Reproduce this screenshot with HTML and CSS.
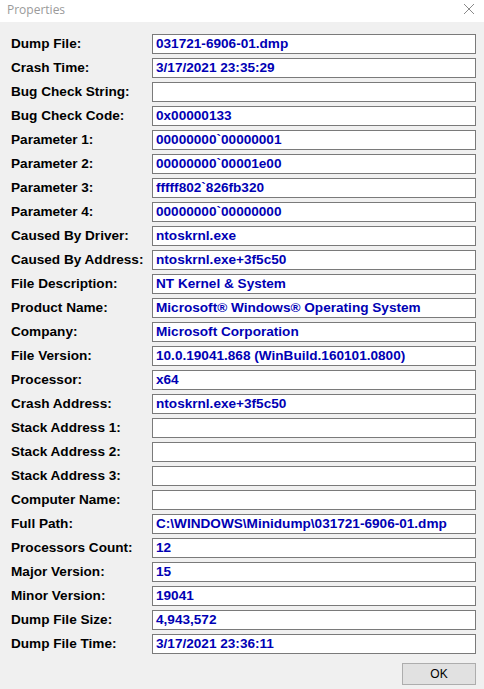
FILE: index.html
```html
<!DOCTYPE html>
<html>
<head>
<meta charset="utf-8">
<link rel="stylesheet" href="styles.css">
</head>
<body>
<div class="window">
  <div class="titlebar">
    <span class="title">Properties</span>
    <svg class="close" width="12" height="12" viewBox="0 0 12 12"><path d="M1 1 L11 11 M11 1 L1 11" stroke="#8a8a8a" stroke-width="1"/></svg>
  </div>
  <div class="content">
    <div class="grid">
      <div class="label">Dump File:</div><div class="field">031721-6906-01.dmp</div>
      <div class="label">Crash Time:</div><div class="field">3/17/2021 23:35:29</div>
      <div class="label">Bug Check String:</div><div class="field"></div>
      <div class="label">Bug Check Code:</div><div class="field">0x00000133</div>
      <div class="label">Parameter 1:</div><div class="field">00000000`00000001</div>
      <div class="label">Parameter 2:</div><div class="field">00000000`00001e00</div>
      <div class="label">Parameter 3:</div><div class="field">fffff802`826fb320</div>
      <div class="label">Parameter 4:</div><div class="field">00000000`00000000</div>
      <div class="label">Caused By Driver:</div><div class="field">ntoskrnl.exe</div>
      <div class="label">Caused By Address:</div><div class="field">ntoskrnl.exe+3f5c50</div>
      <div class="label">File Description:</div><div class="field">NT Kernel &amp; System</div>
      <div class="label">Product Name:</div><div class="field">Microsoft® Windows® Operating System</div>
      <div class="label">Company:</div><div class="field">Microsoft Corporation</div>
      <div class="label">File Version:</div><div class="field">10.0.19041.868 (WinBuild.160101.0800)</div>
      <div class="label">Processor:</div><div class="field">x64</div>
      <div class="label">Crash Address:</div><div class="field">ntoskrnl.exe+3f5c50</div>
      <div class="label">Stack Address 1:</div><div class="field"></div>
      <div class="label">Stack Address 2:</div><div class="field"></div>
      <div class="label">Stack Address 3:</div><div class="field"></div>
      <div class="label">Computer Name:</div><div class="field"></div>
      <div class="label">Full Path:</div><div class="field">C:\WINDOWS\Minidump\031721-6906-01.dmp</div>
      <div class="label">Processors Count:</div><div class="field">12</div>
      <div class="label">Major Version:</div><div class="field">15</div>
      <div class="label">Minor Version:</div><div class="field">19041</div>
      <div class="label">Dump File Size:</div><div class="field">4,943,572</div>
      <div class="label">Dump File Time:</div><div class="field">3/17/2021 23:36:11</div>
    </div>
    <div class="buttons">
      <button class="ok">OK</button>
    </div>
  </div>
</div>
</body>
</html>
```
FILE: styles.css
```css
html, body {
  margin: 0;
  padding: 0;
  background: #f0f0f0;
}
.window {
  width: 484px;
  height: 689px;
  background: #f0f0f0;
  overflow: hidden;
}
.titlebar {
  height: 22px;
  background: #ffffff;
  display: flex;
  align-items: center;
  justify-content: space-between;
  padding: 0 9px 0 7px;
}
.title {
  font-family: "Open Sans", "Noto Sans", sans-serif;
  font-size: 12px;
  color: #9a9a9a;
  position: relative;
  top: -2px;
}
.close {
  display: block;
  position: relative;
  top: -2px;
}
.content {
  padding: 12px 8px 0 11px;
}
.grid {
  display: grid;
  grid-template-columns: 141px 324px;
  grid-auto-rows: 20px;
  row-gap: 4px;
}
.label, .field {
  font-family: "Liberation Sans", Arial, sans-serif;
  font-weight: bold;
  font-size: 13.6px;
  line-height: 18px;
  white-space: nowrap;
}
.label {
  color: #000000;
  padding-top: 1px;
}
.field {
  background: #ffffff;
  border: 1px solid #7a7a7a;
  color: #0000b4;
  padding: 0 0 0 3px;
  overflow: hidden;
}
.buttons {
  display: flex;
  justify-content: flex-end;
  padding-top: 9px;
}
.ok {
  width: 74px;
  height: 22px;
  background: #e1e1e1;
  border: 1px solid #adadad;
  font-family: "Liberation Sans", Arial, sans-serif;
  font-size: 12px;
  color: #000;
  padding: 0;
  margin: 0;
}
```
